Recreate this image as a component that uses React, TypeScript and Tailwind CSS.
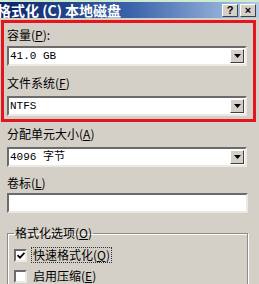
import React from 'react';

const cjk = "font-['SimSun','Noto_Sans_CJK_SC',sans-serif]";
const mono = "font-['Liberation_Mono','Noto_Sans_CJK_SC',monospace]";

// 下划线快捷键字母
function Key({ k }: { k: string }) {
  return (
    <>
      (<span className="underline underline-offset-1">{k}</span>)
    </>
  );
}

function Label({ children, className = '' }: { children: React.ReactNode; className?: string }) {
  return <div className={`h-[14px] leading-[14px] text-[12px] text-black ${className}`}>{children}</div>;
}

// 下拉框
function Combo({ value, className = '' }: { value: string; className?: string }) {
  return (
    <div
      className={`h-[20px] w-[240px] flex items-center bg-white border-2 border-t-[#6b6b6b] border-l-[#6b6b6b] border-b-[#ece9e4] border-r-[#ece9e4] ${className}`}
    >
      <span className={`flex-1 pl-[1px] text-[11px] leading-none text-black ${mono}`}>{value}</span>
      <div className="mr-[1px] w-[14px] h-[14px] flex items-center justify-center bg-[#d4d0c8] border border-t-white border-l-white border-b-[#404040] border-r-[#404040]">
        <svg width="7" height="4" viewBox="0 0 7 4">
          <path d="M0 0h7L3.5 4z" fill="#000" />
        </svg>
      </div>
    </div>
  );
}

function CheckBox({ checked }: { checked: boolean }) {
  return (
    <div className="w-[13px] h-[13px] bg-white border-2 border-t-[#6b6b6b] border-l-[#6b6b6b] border-b-[#ece9e4] border-r-[#ece9e4] flex items-center justify-center">
      {checked && (
        <svg width="8" height="7" viewBox="0 0 8 7">
          <path d="M0.5 3.2 L3 5.6 L7.5 0.8" stroke="#000" strokeWidth="1.8" fill="none" />
        </svg>
      )}
    </div>
  );
}

export default function App() {
  return (
    <div className={`w-[259px] h-[284px] overflow-hidden bg-[#d4d0c8] ${cjk}`}>
      {/* 顶部绿色条 */}
      <div className="h-[2px] bg-[#cfead0]" />

      {/* 标题栏 */}
      <div className="h-[16px] flex items-center bg-gradient-to-r from-[#0a246a] via-[#3a62a8] to-[#b4cde8]">
        <span className="ml-[-3px] flex-1 text-[14px] leading-none font-bold text-white whitespace-nowrap">
          格式化 (C) 本地磁盘
        </span>
        <div className="flex gap-[2px] mr-[3px]">
          <div className="w-[16px] h-[13px] flex items-center justify-center bg-[#d4d0c8] border border-t-white border-l-white border-b-[#404040] border-r-[#404040] text-[11px] font-bold leading-none text-black font-['Liberation_Sans',sans-serif]">
            ?
          </div>
          <div className="w-[16px] h-[13px] flex items-center justify-center bg-[#d4d0c8] border border-t-white border-l-white border-b-[#404040] border-r-[#404040] text-[11px] font-bold leading-none text-black font-['Liberation_Sans',sans-serif]">
            ×
          </div>
        </div>
      </div>

      {/* 红色标注框 */}
      <div className="mt-[2px] ml-[1px] w-[255px] border-[3px] border-[#e3161f] pl-[3px] pt-[5px] pb-[3px]">
        <Label>容量<Key k="P" />:</Label>
        <Combo value="41.0 GB" className="mt-[4px]" />
        <Label className="mt-[10px]">文件系统<Key k="F" /></Label>
        <Combo value="NTFS" className="mt-[6px]" />
      </div>

      <div className="pl-[7px]">
        <Label className="mt-[5px]">分配单元大小<Key k="A" /></Label>
        <Combo value="4096 字节" className="mt-[6px]" />
        <Label className="mt-[9px]">卷标<Key k="L" /></Label>
        <div className="mt-[3px] h-[20px] w-[241px] bg-white border-2 border-t-[#6b6b6b] border-l-[#6b6b6b] border-b-[#ece9e4] border-r-[#ece9e4]" />

        {/* 格式化选项 */}
        <fieldset className="mt-[13px] w-[241px] h-[70px] border border-[#8c8c8c] shadow-[1px_1px_0_#fff,inset_1px_1px_0_#fff] px-[6px]">
          <legend className="px-[1px] h-[14px] leading-[14px] text-[12px] text-black">
            格式化选项<Key k="O" />
          </legend>
          <div className="mt-[8px] flex items-center gap-[5px]">
            <CheckBox checked />
            <span className="px-[1px] h-[14px] leading-[14px] text-[12px] text-black outline outline-1 outline-dotted outline-[#333]">
              快速格式化<Key k="Q" />
            </span>
          </div>
          <div className="mt-[7px] flex items-center gap-[5px]">
            <CheckBox checked={false} />
            <span className="px-[1px] h-[14px] leading-[14px] text-[12px] text-black">
              启用压缩<Key k="E" />
            </span>
          </div>
        </fieldset>
      </div>
    </div>
  );
}
